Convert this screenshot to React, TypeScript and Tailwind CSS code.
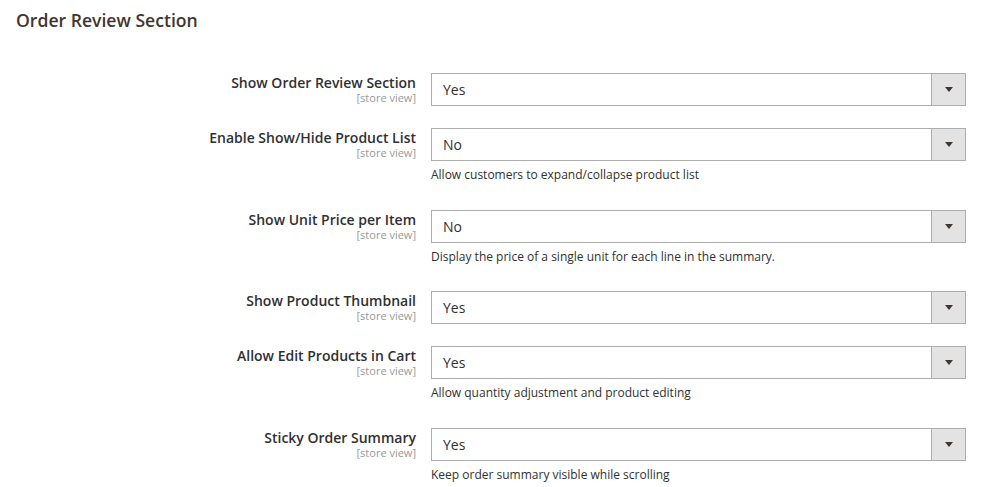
type Field = { label: string; value: string; note?: string };

const fields: Field[] = [
  { label: "Show Order Review Section", value: "Yes" },
  { label: "Enable Show/Hide Product List", value: "No", note: "Allow customers to expand/collapse product list" },
  { label: "Show Unit Price per Item", value: "No", note: "Display the price of a single unit for each line in the summary." },
  { label: "Show Product Thumbnail", value: "Yes" },
  { label: "Allow Edit Products in Cart", value: "Yes", note: "Allow quantity adjustment and product editing" },
  { label: "Sticky Order Summary", value: "Yes", note: "Keep order summary visible while scrolling" },
];

function SelectBox({ value }: { value: string }) {
  return (
    <div className="flex h-[33px] w-[535px] items-stretch border border-[#adadad] bg-white">
      <div className="flex flex-1 items-center pl-[11px] text-[14px] text-[#303030]">{value}</div>
      <div className="flex w-[34px] items-center justify-center border-l border-[#adadad] bg-[#e3e3e3]">
        <span className="h-0 w-0 border-x-[4px] border-t-[5px] border-x-transparent border-t-[#41362f]" />
      </div>
    </div>
  );
}

export default function App() {
  return (
    <div className="min-h-[487px] bg-white" style={{ fontFamily: '"Open Sans", "Liberation Sans", sans-serif' }}>
      <h2 className="pl-4 pt-[10px] text-[17.6px] font-semibold leading-[20px] text-[#41362f]">Order Review Section</h2>
      <div className="mt-[43px]">
        {fields.map((f) => (
          <div key={f.label} className={`flex ${f.note ? "pb-[25.5px]" : "pb-[22px]"}`}>
            <div className="w-[416px] pt-[1px] text-right">
              <div className="text-[14px] font-semibold leading-[17px] text-[#303030]">{f.label}</div>
              <div className="text-[11px] leading-[13px] text-[#999]">[store view]</div>
            </div>
            <div className="ml-[15px]">
              <SelectBox value={f.value} />
              {f.note && <p className="mt-[5px] text-[12px] leading-[18px] text-[#303030]">{f.note}</p>}
            </div>
          </div>
        ))}
      </div>
    </div>
  );
}
